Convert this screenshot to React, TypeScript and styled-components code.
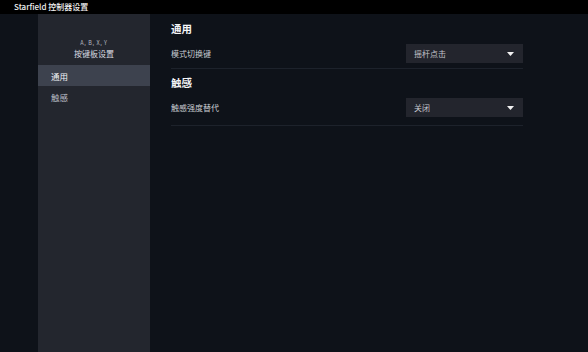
import React from "react";
import styled, { createGlobalStyle } from "styled-components";

const Global = createGlobalStyle`
  html, body { margin: 0; padding: 0; background: #0e1219; }
  body { font-family: "Noto Sans CJK SC", "Noto Sans", sans-serif; }
  * { box-sizing: border-box; }
`;

const Page = styled.div`
  width: 588px;
  height: 352px;
  display: flex;
  flex-direction: column;
  background: #0e1219;
  overflow: hidden;
`;

const TitleBar = styled.div`
  height: 14px;
  flex: none;
  background: #000;
  color: #f2f2f2;
  font-size: 8px;
  line-height: 13px;
  padding-left: 14px;
  font-weight: 500;
`;

const Body = styled.div`
  flex: 1;
  display: flex;
  padding-left: 38px;
`;

const Sidebar = styled.div`
  width: 112px;
  background: #23262e;
  display: flex;
  flex-direction: column;
  padding-top: 25px;
`;

const SideTop = styled.div`
  font-size: 5.5px;
  line-height: 8px;
  color: #b4b8c0;
  text-align: center;
  letter-spacing: 0.6px;
`;

const SideTitle = styled.div`
  font-size: 8px;
  line-height: 10px;
  color: #d8dbe0;
  text-align: center;
  margin-top: 2px;
  margin-bottom: 6px;
`;

const NavItem = styled.div<{ $active?: boolean }>`
  height: 21px;
  display: flex;
  align-items: center;
  padding-left: 13px;
  font-size: 8.5px;
  color: ${(p) => (p.$active ? "#f0f2f5" : "#b9bdc4")};
  background: ${(p) => (p.$active ? "#3d424e" : "transparent")};
`;

const Main = styled.div`
  padding: 8px 0 0 21px;
  width: 373px;
  display: flex;
  flex-direction: column;
`;

const Heading = styled.div<{ $first?: boolean }>`
  font-size: 10.5px;
  line-height: 14px;
  font-weight: 700;
  color: #f4f5f7;
  margin-top: ${(p) => (p.$first ? "0" : "7px")};
`;

const Row = styled.div<{ $pad: number }>`
  display: flex;
  align-items: center;
  justify-content: space-between;
  margin-top: 8px;
  padding-bottom: ${(p) => p.$pad}px;
  border-bottom: 1px solid #1d222b;
`;

const Label = styled.div`
  font-size: 8px;
  color: #c9ccd2;
`;

const Select = styled.div`
  width: 117px;
  height: 19px;
  background: #23252d;
  display: flex;
  align-items: center;
  justify-content: space-between;
  padding: 0 9px 0 8px;
  font-size: 8px;
  color: #c3c6cc;
`;

const Caret = () => (
  <svg width="7" height="4" viewBox="0 0 7 4">
    <path d="M0 0 H7 L3.5 4 Z" fill="#f2f2f2" />
  </svg>
);

export default function App() {
  return (
    <Page>
      <Global />
      <TitleBar>Starfield 控制器设置</TitleBar>
      <Body>
        <Sidebar>
          <SideTop>A, B, X, Y</SideTop>
          <SideTitle>按键板设置</SideTitle>
          <NavItem $active>通用</NavItem>
          <NavItem>触感</NavItem>
        </Sidebar>
        <Main>
          <Heading $first>通用</Heading>
          <Row $pad={5}>
            <Label>模式切换键</Label>
            <Select>
              <span>摇杆点击</span>
              <Caret />
            </Select>
          </Row>
          <Heading>触感</Heading>
          <Row $pad={8}>
            <Label>触感强度替代</Label>
            <Select>
              <span>关闭</span>
              <Caret />
            </Select>
          </Row>
        </Main>
      </Body>
    </Page>
  );
}
